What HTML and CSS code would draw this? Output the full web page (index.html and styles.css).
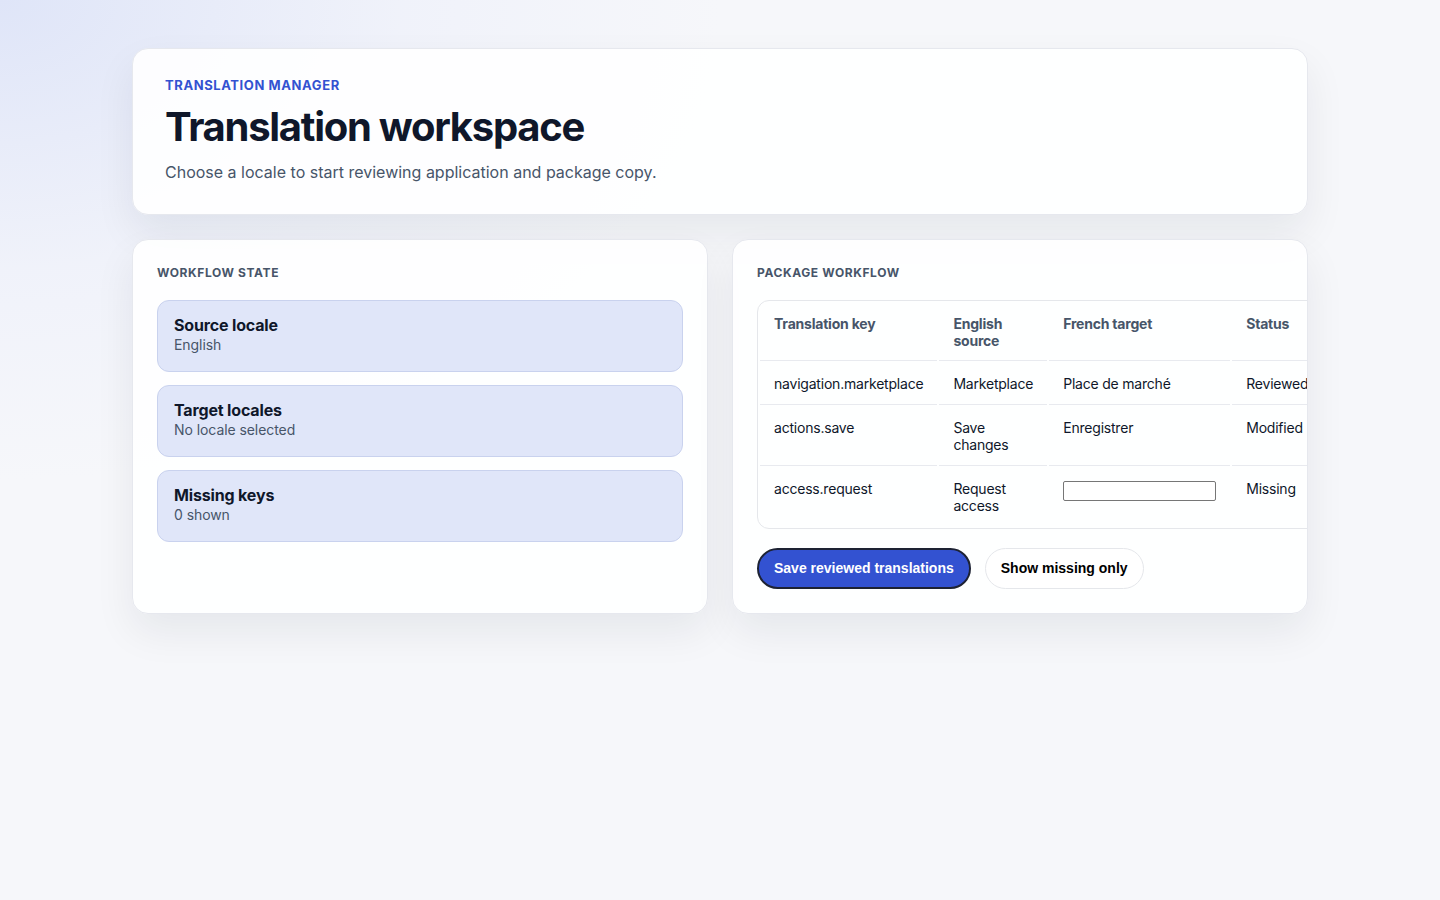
FILE: index.html
```html
<!DOCTYPE html>
<html lang="en">
<head>
<meta charset="utf-8">
<title>Translation workspace</title>
<link rel="stylesheet" href="styles.css">
</head>
<body>
<main class="page">
  <header class="card hero">
    <p class="eyebrow">Translation manager</p>
    <h1 class="title">Translation workspace</h1>
    <p class="subtitle">Choose a locale to start reviewing application and package copy.</p>
  </header>
  <div class="grid">
    <section class="card panel">
      <h2 class="panel-label">Workflow state</h2>
      <div class="states">
        <div class="state">
          <div class="state-title">Source locale</div>
          <div class="state-sub">English</div>
        </div>
        <div class="state">
          <div class="state-title">Target locales</div>
          <div class="state-sub">No locale selected</div>
        </div>
        <div class="state">
          <div class="state-title">Missing keys</div>
          <div class="state-sub">0 shown</div>
        </div>
      </div>
    </section>
    <section class="card panel">
      <h2 class="panel-label">Package workflow</h2>
      <div class="table-wrap">
        <table class="table">
          <thead>
            <tr>
              <th>Translation key</th>
              <th>English source</th>
              <th>French target</th>
              <th>Status</th>
            </tr>
          </thead>
          <tbody>
            <tr>
              <td>navigation.marketplace</td>
              <td>Marketplace</td>
              <td>Place de marché</td>
              <td>Reviewed</td>
            </tr>
            <tr>
              <td>actions.save</td>
              <td>Save changes</td>
              <td>Enregistrer</td>
              <td>Modified</td>
            </tr>
            <tr>
              <td>access.request</td>
              <td>Request access</td>
              <td><input class="target-input" type="text" aria-label="French target for access.request"></td>
              <td>Missing</td>
            </tr>
          </tbody>
        </table>
      </div>
      <div class="actions">
        <button class="btn btn-primary" type="button">Save reviewed translations</button>
        <button class="btn btn-secondary" type="button">Show missing only</button>
      </div>
    </section>
  </div>
</main>
</body>
</html>
```

FILE: styles.css
```css
* {
  box-sizing: border-box;
}

html, body {
  margin: 0;
  min-height: 100%;
}

body {
  min-height: 900px;
  font-family: Inter, "Noto Sans", sans-serif;
  color: #0f172a;
  background:
    radial-gradient(ellipse 900px 600px at 0% 0%, #dfe5f8 0%, rgba(236, 239, 250, 0.6) 45%, rgba(246, 247, 251, 0) 80%),
    #f6f7fa;
}

.page {
  max-width: 1176px;
  margin: 0 auto;
  padding: 48px 0;
}

.card {
  background: rgba(255, 255, 255, 0.9);
  border: 1px solid #e6e8ee;
  border-radius: 16px;
  box-shadow: 0 18px 40px rgba(15, 23, 42, 0.07);
}

.hero {
  padding: 28px 32px 30px;
}

.eyebrow {
  margin: 0;
  font-size: 13px;
  font-weight: 700;
  letter-spacing: 0.045em;
  text-transform: uppercase;
  color: #3352d1;
  line-height: 16px;
}

.title {
  margin: 10px 0 0;
  font-size: 40px;
  font-weight: 700;
  letter-spacing: -0.032em;
  line-height: 48px;
  color: #0f172a;
}

.subtitle {
  margin: 9px 0 0;
  font-size: 16px;
  line-height: 24px;
  color: #475569;
}

.grid {
  display: grid;
  grid-template-columns: 1fr 1fr;
  gap: 24px;
  margin-top: 24px;
}

.panel {
  min-width: 0;
  overflow: hidden;
  padding: 26px 24px 24px;
}

.panel-label {
  margin: 0 0 20px;
  font-size: 12px;
  font-weight: 700;
  letter-spacing: 0.05em;
  text-transform: uppercase;
  color: #475569;
  line-height: 14px;
}

.states {
  display: flex;
  flex-direction: column;
  gap: 13px;
}

.state {
  background: #e0e6f9;
  border: 1px solid #c9d2ee;
  border-radius: 12px;
  padding: 15px 16px 17px;
  height: 72px;
}

.state-title {
  font-size: 16px;
  font-weight: 700;
  line-height: 19px;
  letter-spacing: -0.01em;
  color: #0f172a;
}

.state-sub {
  font-size: 14px;
  line-height: 19px;
  letter-spacing: -0.005em;
  color: #475569;
}

.table-wrap {
  width: min-content;
  border: 1px solid #e5e7eb;
  border-radius: 12px;
}

.table {
  width: 100%;
  border-collapse: separate;
  border-spacing: 2px;
  font-size: 14px;
  line-height: 17px;
  letter-spacing: -0.015em;
}

.table th,
.table td {
  text-align: left;
  vertical-align: top;
  padding: 12px 14px;
  border-bottom: 1px solid #e8eaef;
}

.table th {
  padding-bottom: 11px;
  font-weight: 700;
  color: #475569;
}

.table tbody tr:last-child td {
  border-bottom: none;
}

.table td {
  color: #0f172a;
}

.target-input {
  display: block;
  width: 153px;
  height: 20px;
  margin: 1px 0 0;
  padding: 1px 2px;
  border: 1px solid #767676;
  border-radius: 2px;
  background: #fff;
  font-size: 13px;
}

.actions {
  display: flex;
  gap: 14px;
  margin-top: 19px;
}

.btn {
  font-family: "Liberation Sans", Arial, sans-serif;
  font-size: 14px;
  font-weight: 700;
  line-height: 17px;
  border-radius: 999px;
  cursor: pointer;
}

.btn-primary {
  background: #3352d1;
  color: #ffffff;
  border: 2px solid #1d2233;
  padding: 10px 15px;
}

.btn-secondary {
  background: #ffffff;
  color: #000000;
  border: 1px solid #e5e7eb;
  padding: 11px 15px;
}
```
